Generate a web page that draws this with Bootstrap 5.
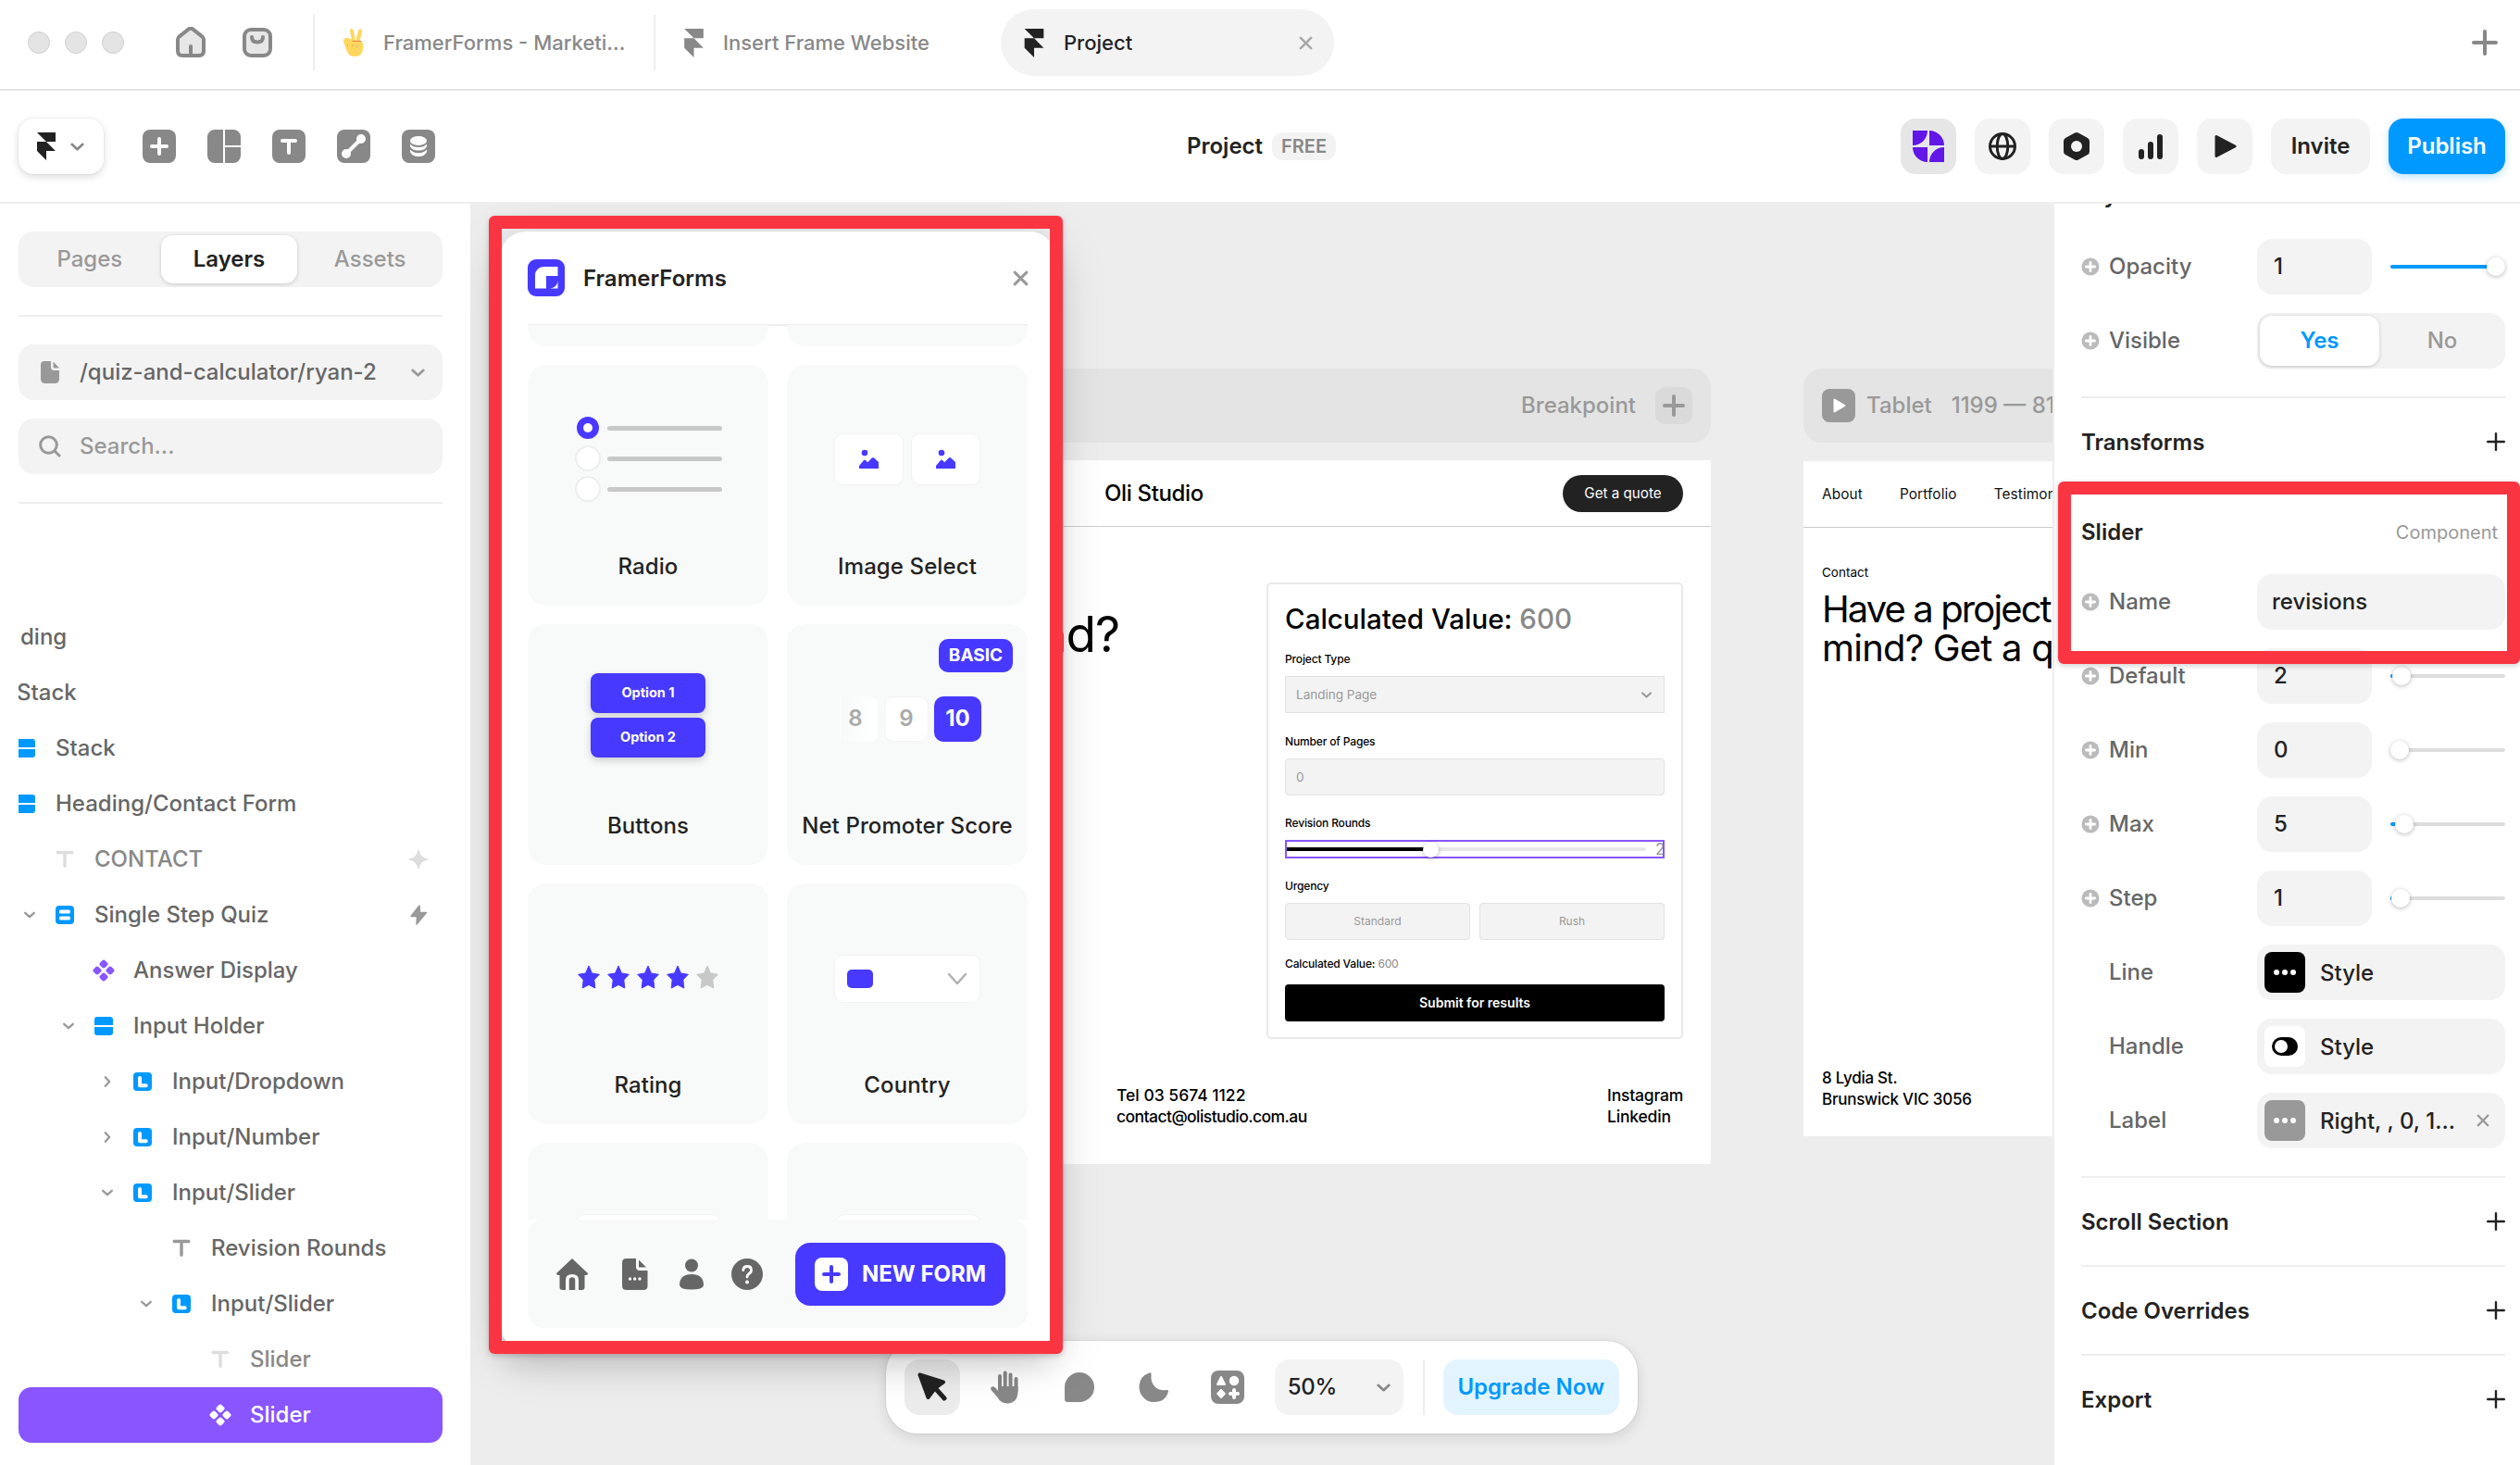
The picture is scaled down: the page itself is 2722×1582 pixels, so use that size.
<!DOCTYPE html>
<html lang="en">
<head>
<meta charset="utf-8">
<title>Project</title>
<meta name="viewport" content="width=device-width, initial-scale=1">
<link href="https://cdn.jsdelivr.net/npm/bootstrap@5.3.0/dist/css/bootstrap.min.css" rel="stylesheet">
<style>
body{font:500 24px/36px Inter,"Liberation Sans",sans-serif;color:#222;background:#fff}
svg{display:block;flex:none}
.fw6{font-weight:600}
.fill{background:#f3f3f3;border-radius:16px}
.c8{color:#888}.c9{color:#999}.c6{color:#666}
.blue{color:#09f}
.rule{height:2px;background:#eee;flex:none}

/* window tabs */
.tabbar{height:98px;border-bottom:2px solid #e5e5e5;font-size:22px;padding:10px 24px 14px 30px;flex:none}
.light{width:24px;height:24px;border-radius:50%;background:#e4e4e4;border:1px solid #cfcfcf;margin-right:16px}
.vsep{width:2px;height:60px;background:#eee;flex:none}
.tab-on{width:360px;height:72px;border-radius:36px;padding:0 23px 0 25px;background:#f3f3f3}

/* toolbar */
.toolbar{height:122px;border-bottom:2px solid #eee;padding:0 16px 0 20px;flex:none}
.framer-btn{width:92px;height:60px;border-radius:16px;box-shadow:0 0 0 1px rgba(0,0,0,.03),0 3px 8px rgba(0,0,0,.14);padding-left:20px;gap:15px}
.tool{width:60px;height:60px;border-radius:16px;background:#f3f3f3}
.tool-on{background:#e6e6e6}
.plan{height:30px;border-radius:12px;background:#f3f3f3;font-size:20px;padding:0 10px;line-height:31px}
.invite{width:107px;height:60px}
.publish{width:126px;height:60px;border-radius:16px;background:#09f;color:#fff;box-shadow:0 3px 8px rgba(0,153,255,.28)}

/* left panel */
.left{width:508px;padding:30px 30px 0 20px;flex:none}
.seg{height:60px}
.seg-on{background:#fff;border-radius:13px;box-shadow:0 1px 4px rgba(0,0,0,.18)}
.left .seg-on{width:148px;height:52px}
.picker{height:60px;padding:0 18px 0 23px}
.tree{overflow:hidden}
.node{height:60px;padding-right:15px;flex:none}
.node>svg,.node>span{flex:none}
.node .glyph{width:24px;height:24px;margin-right:20px}
.node .arrow{width:14px;height:14px;margin-right:19px;color:#999}
.node .end{margin-left:auto}
.chosen{background:#8855ff;color:#fff;border-radius:14px}

/* canvas */
.canvas{background:#ededed;position:relative;overflow:hidden;flex:1 1 0;min-width:0}
.pin{position:absolute}
.bp{height:80px;border-radius:20px;background:#e4e4e4;color:#999}
.bp-plus{width:40px;height:40px;border-radius:10px;background:#dadada}
.site{background:#fff;color:#000}
.site-nav{height:72px;border-bottom:1px solid #ccc}
.quote{width:130px;height:40px;border-radius:20px;background:#222;color:#fff;font-size:15.2px;font-weight:400}
.big{font-weight:400;letter-spacing:-1.9px}
.calc{width:450px;height:493px;border:2px solid #e9e9e9;border-radius:5px;padding:19px 18px 0 18px;font-size:12px}
.calc h2{font:500 29.5px/36px Inter,sans-serif;margin:0 0 16px}
.cl{height:20px;line-height:20px;margin-bottom:8px;letter-spacing:-.15px}
.ctl{height:40px;background:#f3f3f3;border:1px solid #e2e2e2;border-radius:4px;color:#999;font-weight:400;padding:0 11px}
.range{height:20px;border:2px solid #8855ff}
.range i,.track i{display:block}
.foot{font-size:17.5px;line-height:23px}

/* toolbar at canvas bottom */
.dock{left:449px;top:1228px;width:812px;height:100px;border-radius:34px;background:#fff;box-shadow:0 0 0 1px rgba(0,0,0,.06),0 4px 16px rgba(0,0,0,.12);padding:0 20px}
.upgrade{width:191px;height:60px;border-radius:16px;background:#e2f4ff}

/* plugin window */
.plugin{left:32px;top:30px;width:600px;height:1204px;border-radius:28px 28px 22px 22px;background:#fff;box-shadow:0 12px 60px rgba(0,0,0,.14),0 20px 30px rgba(0,0,0,.12);padding:0 30px}
.plugin-head{height:100px;flex:none}
.tiles{display:grid;grid-template-columns:260px 260px;gap:20px;height:966px;overflow:hidden;align-content:start;margin-top:-1px;flex:none}
.tile{height:260px;border-radius:20px;background:#f8f9f9;position:relative}
.tile.cut{height:23px;border-radius:0 0 20px 20px}
.art{height:200px;padding-bottom:1px}
.cap{line-height:36px;text-align:center;letter-spacing:.1px}
.dotc{width:28px;height:28px;border-radius:50%;background:#fff;border:2px solid #eee}
.dotc.on{background:#4739ff;border-color:#f8f9f9}
.dotc.on::after{content:"";display:block;width:10px;height:10px;border-radius:50%;background:#fff;margin:7px}
.bar{width:124px;height:5px;border-radius:3px;background:#c8c8c8}
.white-box{background:#fff;border:1px solid #f3f3f3;border-radius:10px}
.opt{width:124px;height:43px;border-radius:8px;background:#4739ff;color:#fff;font-size:14.5px;font-weight:700;box-shadow:0 3px 8px rgba(0,0,0,.18)}
.tier{right:16px;top:16px;width:80px;height:36px;border-radius:10px;background:#4739ff;color:#fff;font-size:19px;font-weight:700;line-height:36px;text-align:center}
.nps{width:48px;height:49px;border-radius:10px;background:#fff;border:1px solid #f3f3f3;color:#aaa;font-weight:600}
.nps.fade8{width:42px;background:linear-gradient(90deg,#f8f9f9,#fff);border-color:transparent;border-radius:0 10px 10px 0;padding-right:8px}
.nps.on{background:#4739ff;color:#fff;border:0;font-weight:700;width:51px}
.dockbar{height:117px;border-radius:16px;background:#f8f9f9;padding:0 24px 0 31px;color:#666;flex:none}
.newform{width:227px;height:68px;border-radius:16px;background:#4739ff;color:#fff;font-weight:700;gap:15px}

/* annotation frames */
.callout{position:absolute;border:14px solid #fa3542;border-radius:6px;box-shadow:0 2px 6px rgba(0,0,0,.18);pointer-events:none}

/* right panel */
.right{width:505px;border-left:2px solid #eee;background:#fff;padding:0 16px 0 29px;overflow:hidden;flex:none}
.prop{height:60px;margin-bottom:20px;flex:none}
.prop .lead-ic{width:20px;margin-right:10px;flex:none}
.prop .nm{width:160px;flex:none;color:#666}
.field{width:124px;height:60px;padding-left:18px;flex:none}
.wide{width:268px;height:60px;padding-left:16px;flex:none}
.wide.sw{padding-left:8px}
.swatch{width:44px;height:44px;border-radius:8px;margin-right:16px}
.track{width:124px;height:4px;border-radius:2px;background:#ddd;margin-left:20px;position:relative}
.track i{height:4px;background:#09f;border-radius:2px}
.knob{position:absolute;top:-8px;width:20px;height:20px;border-radius:50%;background:#fff;box-shadow:0 1px 5px rgba(0,0,0,.28)}
.yes{width:129px;height:54px;margin-left:3px;color:#09f}
.sec{height:94px;flex:none;font-weight:600}
.sec span{padding-top:2px}
</style>
</head>
<body>
<svg width="0" height="0" class="position-absolute">
  <symbol id="framer" viewBox="0 0 20 30"><path d="M0 0H20V10H10ZM0 10H10L20 20H0ZM0 20H10V30Z" fill="currentColor"/></symbol>
  <symbol id="down" viewBox="0 0 16 16"><path d="M2.500 5.500L8 10.500L13.500 5.500" fill="none" stroke="currentColor" stroke-width="2.600" stroke-linecap="round" stroke-linejoin="round"/></symbol>
  <symbol id="next" viewBox="0 0 16 16"><path d="M5.500 2.500L10.500 8L5.500 13.500" fill="none" stroke="currentColor" stroke-width="2.600" stroke-linecap="round" stroke-linejoin="round"/></symbol>
  <symbol id="plus" viewBox="0 0 20 20"><path d="M10 1.200V18.800M1.200 10H18.800" fill="none" stroke="currentColor" stroke-width="2.400" stroke-linecap="round"/></symbol>
  <symbol id="cross" viewBox="0 0 16 16"><path d="M2 2L14 14M14 2L2 14" fill="none" stroke="currentColor" stroke-width="2.800" stroke-linecap="round"/></symbol>
  <symbol id="pc" viewBox="0 0 20 20"><circle cx="10" cy="10" r="9.500" fill="#bbb"/><path d="M10 5.400V14.600M5.400 10H14.600" stroke="#fff" stroke-width="2.800" stroke-linecap="round"/></symbol>
  <symbol id="stack" viewBox="0 0 24 24"><path d="M2 11V5a3 3 0 0 1 3-3H19a3 3 0 0 1 3 3V11ZM2 13H22V19a3 3 0 0 1-3 3H5a3 3 0 0 1-3-3Z" fill="#09f"/></symbol>
  <symbol id="stack2" viewBox="0 0 24 24"><rect x="2" y="2" width="20" height="20" rx="4" fill="#09f"/><rect x="6" y="6.600" width="12" height="4" rx="1.600" fill="#fff"/><rect x="6" y="13.600" width="12" height="4" rx="1.600" fill="#fff"/></symbol>
  <symbol id="ell" viewBox="0 0 24 24"><rect x="2" y="2" width="20" height="20" rx="4" fill="#09f"/><path d="M9 8V16.300H15.700" fill="none" stroke="#fff" stroke-width="4" stroke-linecap="round" stroke-linejoin="round"/></symbol>
  <symbol id="tee" viewBox="0 0 24 24"><path d="M4.200 4.500H19.800M12 4.500V19.300" fill="none" stroke="currentColor" stroke-width="3.400" stroke-linecap="round"/></symbol>
  <symbol id="comp" viewBox="0 0 24 24"><g fill="currentColor"><rect x="8.200" y="1.200" width="7.600" height="7.600" rx="2.200" transform="rotate(45 12 5)"/><rect x="8.200" y="15.200" width="7.600" height="7.600" rx="2.200" transform="rotate(45 12 19)"/><rect x="1.200" y="8.200" width="7.600" height="7.600" rx="2.200" transform="rotate(45 5 12)"/><rect x="15.200" y="8.200" width="7.600" height="7.600" rx="2.200" transform="rotate(45 19 12)"/></g></symbol>
  <symbol id="pic" viewBox="0 0 22 22"><circle cx="6" cy="4" r="3.300" fill="#4739ff"/><path d="M0 18L5 12Q6 11 7 12L9.200 14.300L13.800 9.400Q15 8.400 16.200 9.400L21 14V20.500Q21 21 20.500 21H.5Q0 21 0 20.500Z" fill="#4739ff"/></symbol>
  <symbol id="star" viewBox="0 0 24 26"><path d="M12 1L15.400 8.900L23.300 10.300L17.800 16L18.800 25L12 21.400L5.200 25L6.200 16L.7 10.300L8.600 8.900Z" fill="currentColor" stroke="currentColor" stroke-linejoin="round"/></symbol>
</svg>

<div class="d-flex flex-column vh-100 overflow-hidden position-relative">

  <!-- window tabs -->
  <header class="tabbar d-flex align-items-center">
    <span class="light"></span><span class="light"></span><span class="light"></span>
    <svg width="32" height="34" viewBox="0 0 32 34" style="margin-left:40px"><path d="M2 13.500Q2 12 3.500 10.600L13.800 2.400Q16 1 18.200 2.400L28.500 10.600Q30 12 30 13.500V26Q30 31 25 31H7Q2 31 2 26Z" fill="#e7e7e7" stroke="#888" stroke-width="4"/><path d="M16 29V21" stroke="#888" stroke-width="4" stroke-linecap="round"/></svg>
    <svg width="32" height="32" viewBox="0 0 32 32" style="margin-left:40px"><rect x="2" y="2" width="28" height="28" rx="7" fill="#e7e7e7" stroke="#888" stroke-width="4"/><path d="M10 10Q10 15.500 16 15.500Q22 15.500 22 10" fill="none" stroke="#888" stroke-width="4" stroke-linecap="round"/></svg>
    <span class="vsep" style="margin-left:44px"></span>
    <svg width="22" height="30" viewBox="0 0 22 30" style="margin-left:31px"><g fill="#ffd75e"><path d="M7 2Q6.600 0 8.600 0Q10.500 0 11 2L13 13H9.200Z"/><path d="M16 2Q16.500 0 18.500 0.500Q20.500 1 20 3.200L17.500 14H13Z"/><path d="M0 14Q0 10 3 10Q4.500 9.500 6 10.500Q9 11 10 12.500H17Q21 13 21 17V21Q21 30 12 30Q6 30 4 25Z"/></g><path d="M9.500 13.500H19M4 18h1M9 18h1M14 19h1" stroke="#ee7a5a" stroke-width="1.200"/></svg>
    <span class="c8" style="margin-left:21px;width:292px">FramerForms - Marketi...</span>
    <span class="vsep"></span>
    <svg class="c8" width="21" height="31" style="margin-left:31px"><use href="#framer"/></svg>
    <span class="c8" style="margin-left:21px;width:300px">Insert Frame Website</span>
    <div class="tab-on d-flex align-items-center">
      <svg width="22" height="31"><use href="#framer"/></svg>
      <span style="margin-left:21px">Project</span>
      <svg class="ms-auto" width="15" height="15" style="color:#a8a8a8"><use href="#cross"/></svg>
    </div>
    <svg class="ms-auto" width="28" height="28" viewBox="0 0 28 28"><path d="M14 2V26M2 14H26" stroke="#888" stroke-width="4" stroke-linecap="round"/></svg>
  </header>

  <!-- toolbar -->
  <div class="toolbar d-flex align-items-center">
    <div class="framer-btn d-flex align-items-center">
      <svg width="20" height="30"><use href="#framer"/></svg>
      <svg width="17" height="17" class="c8"><use href="#down"/></svg>
    </div>
    <div class="d-flex" style="gap:34px;margin-left:42px">
      <svg width="36" height="36"><rect width="36" height="36" rx="8" fill="#888"/><path d="M18 10V26M10 18H26" stroke="#fff" stroke-width="4" stroke-linecap="round"/></svg>
      <svg width="36" height="36"><path d="M8 0H17V36H8a8 8 0 0 1-8-8V8a8 8 0 0 1 8-8ZM19 0H28a8 8 0 0 1 8 8V17H19ZM19 19H36V28a8 8 0 0 1-8 8H19Z" fill="#888"/></svg>
      <svg width="36" height="36"><rect width="36" height="36" rx="8" fill="#888"/><path d="M11 12H25M18 12V25" stroke="#fff" stroke-width="4" stroke-linecap="round"/></svg>
      <svg width="36" height="36"><rect width="36" height="36" rx="8" fill="#888"/><path d="M10 26L26 10" stroke="#fff" stroke-width="4"/><circle cx="10" cy="26" r="5" fill="#fff"/><circle cx="26" cy="10" r="5" fill="#fff"/></svg>
      <svg width="36" height="36"><rect width="36" height="36" rx="8" fill="#888"/><ellipse cx="18" cy="12" rx="9" ry="5" fill="#fff"/><path d="M9 15.500Q12 19 18 19Q24 19 27 15.500V18Q25 22.500 18 22.500Q11 22.500 9 18ZM9 21.500Q12 25.200 18 25.200Q24 25.200 27 21.500V24Q25 29 18 29Q11 29 9 24Z" fill="#fff"/></svg>
    </div>
    <span class="fw6" style="margin-left:812px">Project</span>
    <span class="plan fw6 c8" style="margin-left:10px">FREE</span>
    <div class="d-flex ms-auto" style="gap:20px">
      <div class="tool tool-on d-flex align-items-center justify-content-center"><svg width="34" height="34" viewBox="0 0 34 34"><path d="M0 0H16C16 9 9 16 0 16ZM18 0A16 16 0 0 1 34 16H18ZM0 18H16V34A16 16 0 0 1 0 18ZM34 18V34H18C18 25 25 18 34 18Z" fill="#6216e8"/></svg></div>
      <div class="tool d-flex align-items-center justify-content-center"><svg width="32" height="32" viewBox="0 0 32 32" fill="none" stroke="#222" stroke-width="3"><circle cx="16" cy="16" r="13.500"/><ellipse cx="16" cy="16" rx="5.800" ry="13.500"/><path d="M3 16H29"/></svg></div>
      <div class="tool d-flex align-items-center justify-content-center"><svg width="32" height="32" viewBox="0 0 32 32"><path d="M14 1.500Q16 .5 18 1.500L28 7Q30 8 30 10.500V21.500Q30 24 28 25L18 30.500Q16 31.500 14 30.500L4 25Q2 24 2 21.500V10.500Q2 8 4 7Z" fill="#222"/><circle cx="16" cy="16" r="6" fill="#f3f3f3"/></svg></div>
      <div class="tool d-flex align-items-center justify-content-center"><svg width="28" height="30" viewBox="0 0 28 30" stroke="#222" stroke-width="6" stroke-linecap="round"><path d="M4 21V26M14 13V26M24 5V26"/></svg></div>
      <div class="tool d-flex align-items-center justify-content-center"><svg width="24" height="28" viewBox="0 0 24 28" style="margin-left:2px"><path d="M2 3.500V24.500L22 14Z" fill="#222" stroke="#222" stroke-width="3" stroke-linejoin="round"/></svg></div>
      <div class="fill invite fw6 d-flex align-items-center justify-content-center">Invite</div>
      <div class="publish fw6 d-flex align-items-center justify-content-center">Publish</div>
    </div>
  </div>

  <div class="d-flex flex-grow-1" style="min-height:0">

    <!-- layers panel -->
    <aside class="left d-flex flex-column">
      <div class="seg fill d-flex align-items-center c9 text-center">
        <span style="width:154px">Pages</span>
        <span class="seg-on fw6 d-flex align-items-center justify-content-center" style="color:#222">Layers</span>
        <span style="width:157px">Assets</span>
      </div>
      <div class="rule" style="margin-top:30px"></div>
      <div class="picker fill d-flex align-items-center c6" style="margin-top:30px">
        <svg width="24" height="26" viewBox="0 0 24 26"><path d="M5 1H12V7Q12 11 16 11H21V20Q21 25 16 25H6Q1 25 1 20V5Q1 1 5 1Z" fill="#999"/><path d="M14.500 1.500L21 8.500H16Q14.500 8.500 14.500 7Z" fill="#999"/></svg>
        <span style="margin-left:19px">/quiz-and-calculator/ryan-2</span>
        <svg class="ms-auto c9" width="17" height="17"><use href="#down"/></svg>
      </div>
      <div class="picker fill d-flex align-items-center c9" style="margin-top:20px;padding-left:22px">
        <svg width="24" height="24" viewBox="0 0 24 24" fill="none" stroke="#999" stroke-width="3"><circle cx="10.500" cy="10.500" r="8.800"/><path d="M17 17L22 22" stroke-linecap="round"/></svg>
        <span style="margin-left:20px">Search...</span>
      </div>
      <div class="rule" style="margin-top:30px;margin-bottom:114px"></div>

      <div class="tree d-flex flex-column c6">
        <div class="node d-flex align-items-center"><span style="margin-left:2px">ding</span></div>
        <div class="node d-flex align-items-center"><span style="margin-left:-2px">Stack</span></div>
        <div class="node d-flex align-items-center"><svg class="glyph" style="margin-left:-4px"><use href="#stack"/></svg><span>Stack</span></div>
        <div class="node d-flex align-items-center"><svg class="glyph" style="margin-left:-4px"><use href="#stack"/></svg><span>Heading/Contact Form</span></div>
        <div class="node d-flex align-items-center c8" style="padding-left:38px"><svg class="glyph" style="color:#ddd"><use href="#tee"/></svg><span>CONTACT</span>
          <svg class="end" width="22" height="22" viewBox="0 0 22 22"><path d="M11 1Q12.500 9.500 21 11Q12.500 12.500 11 21Q9.500 12.500 1 11Q9.500 9.500 11 1Z" fill="#ddd" stroke="#ddd" stroke-linejoin="round"/></svg></div>
        <div class="node d-flex align-items-center" style="padding-left:5px"><svg class="arrow"><use href="#down"/></svg><svg class="glyph"><use href="#stack2"/></svg><span>Single Step Quiz</span>
          <svg class="end" width="20" height="22" viewBox="0 0 20 22" style="margin-right:1px"><path d="M11 1L2 12.500H8.500L8 21L18.500 8.500H11.500Z" fill="#999" stroke="#999" stroke-width="1.500" stroke-linejoin="round"/></svg></div>
        <div class="node d-flex align-items-center" style="padding-left:80px"><svg class="glyph" style="color:#8855ff"><use href="#comp"/></svg><span>Answer Display</span></div>
        <div class="node d-flex align-items-center" style="padding-left:47px"><svg class="arrow"><use href="#down"/></svg><svg class="glyph"><use href="#stack"/></svg><span>Input Holder</span></div>
        <div class="node d-flex align-items-center" style="padding-left:89px"><svg class="arrow"><use href="#next"/></svg><svg class="glyph"><use href="#ell"/></svg><span>Input/Dropdown</span></div>
        <div class="node d-flex align-items-center" style="padding-left:89px"><svg class="arrow"><use href="#next"/></svg><svg class="glyph"><use href="#ell"/></svg><span>Input/Number</span></div>
        <div class="node d-flex align-items-center" style="padding-left:89px"><svg class="arrow"><use href="#down"/></svg><svg class="glyph"><use href="#ell"/></svg><span>Input/Slider</span></div>
        <div class="node d-flex align-items-center" style="padding-left:164px"><svg class="glyph c9"><use href="#tee"/></svg><span>Revision Rounds</span></div>
        <div class="node d-flex align-items-center" style="padding-left:131px"><svg class="arrow"><use href="#down"/></svg><svg class="glyph"><use href="#ell"/></svg><span>Input/Slider</span></div>
        <div class="node d-flex align-items-center c8" style="padding-left:206px"><svg class="glyph" style="color:#ddd"><use href="#tee"/></svg><span>Slider</span></div>
        <div class="node chosen d-flex align-items-center" style="padding-left:206px"><svg class="glyph"><use href="#comp"/></svg><span>Slider</span></div>
      </div>
    </aside>

    <!-- canvas -->
    <main class="canvas">
      <div class="pin bp d-flex align-items-center justify-content-end" style="left:300px;top:178px;width:1040px;padding-right:20px">
        <span>Breakpoint</span>
        <span class="bp-plus d-flex align-items-center justify-content-center" style="margin-left:21px"><svg width="24" height="24" viewBox="0 0 24 24"><path d="M12 2V22M2 12H22" stroke="#999" stroke-width="4" stroke-linecap="round"/></svg></span>
      </div>
      <section class="pin site d-flex flex-column" style="left:300px;top:277px;width:1040px;height:760px">
        <div class="site-nav d-flex align-items-center" style="padding:1px 30px 0 385px">
          <span style="letter-spacing:-.35px">Oli Studio</span>
          <span class="quote ms-auto d-flex align-items-center justify-content-center">Get a quote</span>
        </div>
        <div class="d-flex justify-content-between" style="padding:60px 30px 0 0">
          <div class="big text-end" style="width:401px;font-size:53px;line-height:60px;padding-top:26px;letter-spacing:-1px">nd?</div>
          <div class="calc d-flex flex-column">
            <h2>Calculated Value: <span class="c8">600</span></h2>
            <div class="cl">Project Type</div>
            <div class="ctl d-flex align-items-center justify-content-between" style="font-size:13.500px;border-radius:0;padding-right:12px">Landing Page<svg width="13" height="13"><use href="#down"/></svg></div>
            <div class="cl" style="margin-top:21px">Number of Pages</div>
            <div class="ctl d-flex align-items-center" style="font-size:13.500px">0</div>
            <div class="cl" style="margin-top:20px">Revision Rounds</div>
            <div class="range d-flex align-items-center position-relative">
              <i style="width:150px;height:4px;background:#000"></i>
              <i style="width:238px;height:4px;background:#e8e8e8;border-radius:2px"></i>
              <span class="c9" style="margin-left:10px;width:8px;overflow:hidden;font-size:17px;font-weight:400;line-height:16px">2</span>
              <span class="knob" style="left:147px;top:0;width:17px;height:17px"></span>
            </div>
            <div class="cl" style="margin-top:20px">Urgency</div>
            <div class="d-flex" style="gap:10px">
              <div class="ctl flex-fill w-50 d-flex align-items-center justify-content-center">Standard</div>
              <div class="ctl flex-fill w-50 d-flex align-items-center justify-content-center">Rush</div>
            </div>
            <div class="cl" style="margin-top:16px;margin-bottom:12px">Calculated Value: <span class="c8" style="font-weight:400">600</span></div>
            <div class="d-flex align-items-center justify-content-center text-white fw6" style="height:40px;background:#000;border-radius:4px;font-size:14px">Submit for results</div>
          </div>
        </div>
        <div class="foot d-flex justify-content-between" style="padding:49px 30px 0 398px">
          <div><div>Tel 03 5674 1122</div><div style="letter-spacing:-.55px">contact@olistudio.com.au</div></div>
          <div style="letter-spacing:-.2px">Instagram<br>Linkedin</div>
        </div>
      </section>

      <div class="pin bp d-flex align-items-center" style="left:1440px;top:178px;width:700px;padding-left:20px">
        <svg width="36" height="36"><rect width="36" height="36" rx="8" fill="#999"/><path d="M13.500 11.500V24.500L24.500 18Z" fill="#fff" stroke="#fff" stroke-width="2" stroke-linejoin="round"/></svg>
        <span style="margin-left:12px">Tablet</span>
        <span style="margin-left:21px">1199 — 810</span>
      </div>
      <section class="pin site d-flex flex-column" style="left:1440px;top:278px;width:700px;height:729px">
        <div class="site-nav d-flex align-items-center text-nowrap" style="padding:1px 0 0 20px;font-size:15.400px;font-weight:400;color:#111;gap:40px;letter-spacing:.1px"><span>About</span><span>Portfolio</span><span>Testimonials</span></div>
        <div style="padding:38px 0 0 20px;font-size:13.500px;font-weight:400;line-height:20px">Contact</div>
        <div class="big text-nowrap" style="padding:9px 0 0 20px;font-size:40px;line-height:42px">Have a project in<br><span style="letter-spacing:-.8px">mind? Get a quote</span></div>
        <div class="foot mt-auto" style="padding:0 0 28px 20px;font-size:17px"><span style="letter-spacing:-.25px">8 Lydia St.<br>Brunswick VIC 3056</span></div>
      </section>

      <div class="pin dock d-flex align-items-center c8">
        <span class="d-flex align-items-center justify-content-center" style="width:60px;height:60px;border-radius:16px;background:#ececec"><svg width="34" height="34" viewBox="0 0 34 34"><path d="M3.500 3.500L29 11.500L20.500 17.500L12.500 28Z" fill="#222" stroke="#222" stroke-width="4" stroke-linejoin="round"/><path d="M21 19L30 29" stroke="#222" stroke-width="5" stroke-linecap="round"/></svg></span>
        <svg width="34" height="36" viewBox="0 0 34 36" style="margin-left:31px"><g stroke="#888" stroke-width="4" stroke-linecap="round"><path d="M12 6V20M17.700 2.500V20M23.500 4.500V20M29.500 9V22"/></g><path d="M10 17H31.500V22Q31.500 35 20 35.500Q13 35.500 9.500 29L3 21.500Q1 18.500 3.500 17.500Q5.500 16.800 7.500 19L10 22Z" fill="#888"/></svg>
        <svg width="34" height="34" viewBox="0 0 34 34" style="margin-left:47px"><path d="M17 1A16 16 0 1 1 17 33H4Q1 33 1 30V17A16 16 0 0 1 17 1Z" fill="#888"/></svg>
        <svg width="34" height="34" viewBox="0 0 34 34" style="margin-left:46px"><path d="M12.500 1.500Q15 .5 14.500 3Q13.500 12 19 17Q24 21 31 20Q33.500 19.500 33 21.500Q30 33 17.500 33Q10 33 5.500 27.500Q1 22 1.500 15Q2.500 5 12.500 1.500Z" fill="#888"/></svg>
        <svg width="36" height="36" viewBox="0 0 36 36" style="margin-left:45px"><rect width="36" height="36" rx="8" fill="#888"/><path d="M11 7L15 15H7Z" fill="#fff" stroke="#fff" stroke-width="2" stroke-linejoin="round"/><circle cx="25" cy="11" r="5.200" fill="#fff"/><path d="M11 20L15.500 25L11 30L6.500 25Z" fill="#fff" stroke="#fff" stroke-linejoin="round"/><path d="M25 21V29M21 25H29" stroke="#fff" stroke-width="4" stroke-linecap="round"/></svg>
        <span class="fill d-flex align-items-center justify-content-between" style="width:139px;height:60px;margin-left:33px;padding:0 13px 0 14px;color:#222;letter-spacing:-.3px">50%<svg width="17" height="17" class="c8"><use href="#down"/></svg></span>
        <span class="vsep" style="margin-left:21px"></span>
        <span class="upgrade blue fw6 d-flex align-items-center justify-content-center text-nowrap" style="margin-left:20px">Upgrade Now</span>
      </div>

      <!-- plugin window -->
      <section class="pin plugin d-flex flex-column">
        <div class="plugin-head d-flex align-items-center">
          <svg width="40" height="40"><rect width="40" height="40" rx="9" fill="#4739ff"/><path d="M17 8H32.500V18H20V31.500H8V17A9 9 0 0 1 17 8Z" fill="#fff"/><path d="M22 31.500H24A8.500 8.500 0 0 0 32.500 23V31.500Z" fill="#fff"/></svg>
          <span class="fw6" style="margin-left:20px;padding-top:1px">FramerForms</span>
          <svg class="ms-auto c9" width="17" height="17" style="margin-right:-1px"><use href="#cross"/></svg>
        </div>
        <div class="rule"></div>
        <div class="tiles">
          <div class="tile cut"></div><div class="tile cut"></div>
          <div class="tile">
            <div class="art d-flex flex-column justify-content-center align-items-center" style="gap:5px;padding-top:3px">
              <div class="d-flex align-items-center" style="gap:7px"><span class="dotc on"></span><span class="bar"></span></div>
              <div class="d-flex align-items-center" style="gap:7px"><span class="dotc"></span><span class="bar"></span></div>
              <div class="d-flex align-items-center" style="gap:7px"><span class="dotc"></span><span class="bar"></span></div>
            </div>
            <div class="cap">Radio</div>
          </div>
          <div class="tile">
            <div class="art d-flex justify-content-center align-items-center" style="gap:8px;padding-top:4px">
              <span class="white-box d-flex align-items-center justify-content-center" style="width:75px;height:56px"><svg width="22" height="22"><use href="#pic"/></svg></span>
              <span class="white-box d-flex align-items-center justify-content-center" style="width:75px;height:56px"><svg width="22" height="22"><use href="#pic"/></svg></span>
            </div>
            <div class="cap">Image Select</div>
          </div>
          <div class="tile">
            <div class="art d-flex flex-column justify-content-center align-items-center" style="gap:5px;padding-bottom:4px">
              <span class="opt d-flex align-items-center justify-content-center">Option 1</span>
              <span class="opt d-flex align-items-center justify-content-center">Option 2</span>
            </div>
            <div class="cap">Buttons</div>
          </div>
          <div class="tile">
            <span class="tier position-absolute">BASIC</span>
            <div class="art d-flex justify-content-end align-items-center" style="gap:6px;padding-top:5px;padding-right:50px">
              <span class="nps fade8 d-flex align-items-center justify-content-center">8</span>
              <span class="nps d-flex align-items-center justify-content-center">9</span>
              <span class="nps on d-flex align-items-center justify-content-center">10</span>
            </div>
            <div class="cap">Net Promoter Score</div>
          </div>
          <div class="tile">
            <div class="art d-flex justify-content-center align-items-center" style="gap:8px;color:#4739ff;padding-top:3px">
              <svg width="24" height="26"><use href="#star"/></svg><svg width="24" height="26"><use href="#star"/></svg><svg width="24" height="26"><use href="#star"/></svg><svg width="24" height="26"><use href="#star"/></svg><svg width="24" height="26" style="color:#c8c8c8"><use href="#star"/></svg>
            </div>
            <div class="cap">Rating</div>
          </div>
          <div class="tile">
            <div class="art d-flex justify-content-center align-items-center" style="padding-top:6px">
              <span class="white-box d-flex align-items-center justify-content-between" style="width:158px;height:52px;padding:0 13px"><i style="width:28px;height:20px;border-radius:5px;background:#4739ff"></i><svg width="22" height="14" viewBox="0 0 22 14"><path d="M2 2L11 12L20 2" fill="none" stroke="#b0b0b0" stroke-width="2.500" stroke-linecap="round" stroke-linejoin="round"/></svg></span>
            </div>
            <div class="cap">Country</div>
          </div>
          <div class="tile d-flex justify-content-center align-items-start" style="padding-top:77px"><span class="white-box" style="width:157px;height:52px"></span></div>
          <div class="tile d-flex justify-content-center align-items-start" style="padding-top:77px"><span class="white-box" style="width:157px;height:52px"></span></div>
        </div>
        <div class="dockbar d-flex align-items-center">
          <svg width="34" height="34" viewBox="0 0 34 34"><path d="M17 0L34 16Q34 18 32 18H30.500V31Q30.500 34 27.500 34H24V23Q24 17 17 17Q10 17 10 23V34H6.500Q3.500 34 3.500 31V18H2Q0 18 0 16Z" fill="#666"/><path d="M13.500 34V23.500Q13.500 20 17 20Q20.500 20 20.500 23.500V34" fill="#666"/><path d="M12.200 34V24Q12.200 19 17 19Q21.800 19 21.800 24V34" fill="none" stroke="#f8f9f9" stroke-width="2.600"/></svg>
          <svg width="28" height="34" viewBox="0 0 28 34" style="margin-left:37px"><path d="M4.500 0H15V9Q15 13 19 13H27.500V29.500Q27.500 34 23 34H4.500Q0 34 0 29.500V4.500Q0 0 4.500 0Z" fill="#666"/><path d="M18 1.500L26 9.500H18Z" fill="#666"/><g fill="#fff"><circle cx="8.500" cy="22" r="1.700"/><circle cx="13.700" cy="22" r="1.700"/><circle cx="19" cy="22" r="1.700"/></g></svg>
          <svg width="26" height="34" viewBox="0 0 26 34" style="margin-left:34px"><circle cx="13" cy="7.500" r="7" fill="#666"/><path d="M0 29Q0 17 13 17Q26 17 26 29Q25 33.500 13 33.500Q1 33.500 0 29Z" fill="#666"/></svg>
          <svg width="34" height="34" viewBox="0 0 34 34" style="margin-left:30px"><circle cx="17" cy="17" r="17" fill="#666"/><path d="M12.800 12.500Q13 8.500 17.200 8.500Q21.500 8.500 21.500 12.500Q21.500 15 19 16.500Q17 17.700 17 20" fill="none" stroke="#fff" stroke-width="2.800" stroke-linecap="round"/><circle cx="17" cy="25.500" r="2" fill="#fff"/></svg>
          <div class="newform ms-auto d-flex align-items-center justify-content-center"><svg width="36" height="36"><rect width="36" height="36" rx="8" fill="#fff"/><path d="M18 10V26M10 18H26" stroke="#4739ff" stroke-width="4" stroke-linecap="round"/></svg>NEW FORM</div>
        </div>
      </section>
      <div class="callout" style="left:20px;top:13px;width:620px;height:1229px"></div>
    </main>

    <!-- properties panel -->
    <aside class="right d-flex flex-column">
      <div class="fw6" style="height:38px;margin-top:-18px;line-height:18px;flex:none">Styles</div>
      <div class="prop d-flex align-items-center" style="margin-top:18px"><svg class="lead-ic" height="20"><use href="#pc"/></svg><span class="nm">Opacity</span><span class="fill field d-flex align-items-center">1</span><span class="track"><i style="width:120px"></i><span class="knob" style="left:104px"></span></span></div>
      <div class="prop d-flex align-items-center"><svg class="lead-ic" height="20"><use href="#pc"/></svg><span class="nm">Visible</span><span class="fill d-flex align-items-center text-center c9" style="width:268px;height:60px"><span class="seg-on yes fw6 d-flex align-items-center justify-content-center">Yes</span><span class="flex-fill">No</span></span></div>
      <div class="rule" style="margin-top:10px"></div>
      <div class="sec d-flex align-items-center justify-content-between"><span>Transforms</span><svg width="20" height="20"><use href="#plus"/></svg></div>
      <div class="rule"></div>
      <div class="d-flex align-items-center justify-content-between" style="height:94px;flex:none;padding:3px 8px 0 0"><span class="fw6">Slider</span><span class="c9" style="font-size:20px;font-weight:400;padding-top:1px">Component</span></div>
      <div class="prop d-flex align-items-center"><svg class="lead-ic" height="20"><use href="#pc"/></svg><span class="nm">Name</span><span class="fill wide d-flex align-items-center">revisions</span></div>
      <div class="prop d-flex align-items-center"><svg class="lead-ic" height="20"><use href="#pc"/></svg><span class="nm">Default</span><span class="fill field d-flex align-items-center">2</span><span class="track"><i style="width:4px"></i><span class="knob" style="left:2px"></span></span></div>
      <div class="prop d-flex align-items-center"><svg class="lead-ic" height="20"><use href="#pc"/></svg><span class="nm">Min</span><span class="fill field d-flex align-items-center">0</span><span class="track"><span class="knob" style="left:0"></span></span></div>
      <div class="prop d-flex align-items-center"><svg class="lead-ic" height="20"><use href="#pc"/></svg><span class="nm">Max</span><span class="fill field d-flex align-items-center">5</span><span class="track"><i style="width:8px"></i><span class="knob" style="left:5px"></span></span></div>
      <div class="prop d-flex align-items-center"><svg class="lead-ic" height="20"><use href="#pc"/></svg><span class="nm">Step</span><span class="fill field d-flex align-items-center">1</span><span class="track"><i style="width:3px"></i><span class="knob" style="left:1px"></span></span></div>
      <div class="prop d-flex align-items-center"><span class="lead-ic"></span><span class="nm">Line</span><span class="fill wide sw d-flex align-items-center"><svg class="swatch" viewBox="0 0 44 44" style="background:#000"><g fill="#fff"><circle cx="13" cy="22" r="3"/><circle cx="22" cy="22" r="3"/><circle cx="31" cy="22" r="3"/></g></svg><span style="padding-top:1px">Style</span></span></div>
      <div class="prop d-flex align-items-center"><span class="lead-ic"></span><span class="nm">Handle</span><span class="fill wide sw d-flex align-items-center"><svg class="swatch" viewBox="0 0 44 44" style="background:#fff"><rect x="8" y="12" width="28" height="20" rx="10" fill="#000"/><circle cx="18" cy="22" r="7" fill="#fff"/></svg><span style="padding-top:1px">Style</span></span></div>
      <div class="prop d-flex align-items-center"><span class="lead-ic"></span><span class="nm">Label</span><span class="fill wide sw d-flex align-items-center" style="padding-right:17px"><svg class="swatch" viewBox="0 0 44 44" style="background:#999"><g fill="#fff"><circle cx="13" cy="22" r="3"/><circle cx="22" cy="22" r="3"/><circle cx="31" cy="22" r="3"/></g></svg><span style="padding-top:1px">Right, , 0, 1...</span><svg class="ms-auto c9" width="14" height="14"><use href="#cross"/></svg></span></div>
      <div class="rule" style="margin-top:10px"></div>
      <div class="sec d-flex align-items-center justify-content-between"><span>Scroll Section</span><svg width="20" height="20"><use href="#plus"/></svg></div>
      <div class="rule"></div>
      <div class="sec d-flex align-items-center justify-content-between"><span>Code Overrides</span><svg width="20" height="20"><use href="#plus"/></svg></div>
      <div class="rule"></div>
      <div class="sec d-flex align-items-center justify-content-between"><span>Export</span><svg width="20" height="20"><use href="#plus"/></svg></div>
    </aside>
  </div>

  <div class="callout" style="left:2223px;top:520px;width:499px;height:197px"></div>
</div>
<script src="https://cdn.jsdelivr.net/npm/bootstrap@5.3.0/dist/js/bootstrap.bundle.min.js"></script>
</body>
</html>
